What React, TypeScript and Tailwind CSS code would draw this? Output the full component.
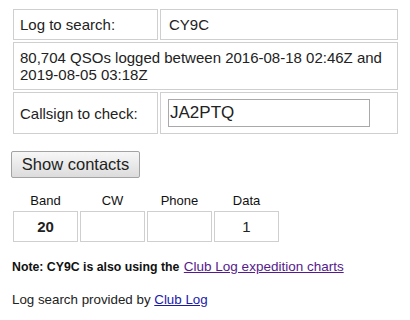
import React from "react";

export default function App() {
  const cell = "border border-[#cfcfcf] p-[6px] text-[15px] leading-[17px]";
  return (
    <div className="min-h-[320px] w-[410px] bg-white pl-[11px] pt-[7px] font-['Liberation_Sans',Arial,sans-serif] text-[#222]">
      <div className="flex w-[389px] flex-col gap-[2px] p-[2px]">
        <div className="flex gap-[2px]">
          <div className={`${cell} w-[145px]`}>Log to search:</div>
          <div className={`${cell} flex-1 pl-[8px]`}>CY9C</div>
        </div>
        <div className={cell}>
          80,704 QSOs logged between 2016-08-18 02:46Z and 2019-08-05 03:18Z
        </div>
        <div className="flex gap-[2px]">
          <div className={`${cell} flex w-[145px] items-center`}>Callsign to check:</div>
          <div className={`${cell} flex-1 pl-[7px]`}>
            <input
              readOnly
              value="JA2PTQ"
              className="block h-[28px] w-[202px] border border-[#a9a9a9] bg-white px-[1px] text-[17px] text-[#222] outline-none font-['Liberation_Sans',Arial,sans-serif]"
            />
          </div>
        </div>
      </div>

      <button className="mt-[15px] block h-[27px] w-[129px] rounded-[2px] border border-[#a3a3a3] bg-gradient-to-b from-[#f7f7f7] to-[#dcdcdc] text-center text-[16.5px] leading-[19px] text-[#222] font-['Liberation_Sans',Arial,sans-serif]">
        Show contacts
      </button>

      <div className="mt-[15px] pl-[2px]">
        <div className="flex h-[15px] gap-[2px] text-[13px] leading-[15px] text-[#111]">
          <div className="w-[65px] text-center">Band</div>
          <div className="w-[65px] text-center">CW</div>
          <div className="w-[65px] text-center">Phone</div>
          <div className="w-[65px] text-center">Data</div>
        </div>
        <div className="mt-[3px] flex gap-[2px] text-[15px] leading-[17px]">
          <div className="flex h-[31px] w-[65px] items-center justify-center border border-[#cfcfcf] font-bold">20</div>
          <div className="h-[31px] w-[65px] border border-[#cfcfcf]"></div>
          <div className="h-[31px] w-[65px] border border-[#cfcfcf]"></div>
          <div className="flex h-[31px] w-[65px] items-center justify-center border border-[#cfcfcf]">1</div>
        </div>
      </div>

      <p className="mt-[17px] pl-[1px] text-[12.3px] font-bold leading-[16px] text-[#111]">
        Note: CY9C is also using the{" "}
        <a href="#" className="ml-[1px] text-[13.5px] font-normal leading-[16px] text-[#551a8b] underline">
          Club Log expedition charts
        </a>
      </p>

      <p className="mt-[17px] pl-[1px] text-[13.33px] leading-[16px] text-[#222]">
        Log search provided by{" "}
        <a href="#" className="text-[#1a1aaa] underline">
          Club Log
        </a>
      </p>
    </div>
  );
}
